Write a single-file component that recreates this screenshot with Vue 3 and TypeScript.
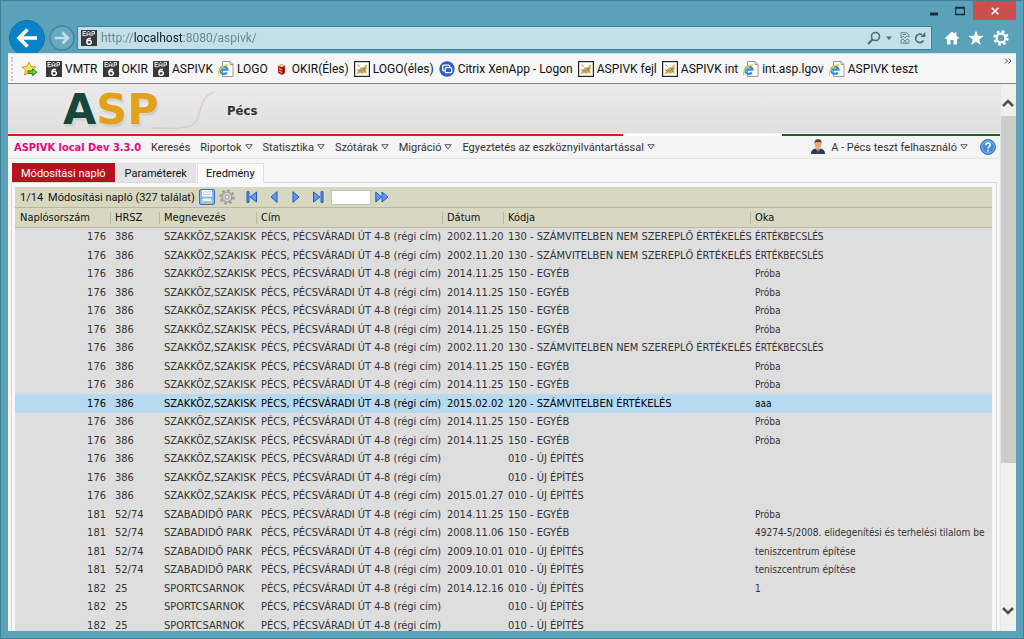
<script setup lang="ts">
import { ref } from 'vue'

interface Bookmark { icon: 'eap' | 'ie' | 'can' | 'cat' | 'citrix'; label: string }
interface Row { id: number; hrsz: string; name: string; date: string; code: string; reason: string }

const bookmarks: Bookmark[] = [
  { icon: 'eap', label: 'VMTR' },
  { icon: 'eap', label: 'OKIR' },
  { icon: 'eap', label: 'ASPIVK' },
  { icon: 'ie', label: 'LOGO' },
  { icon: 'can', label: 'OKIR(Éles)' },
  { icon: 'cat', label: 'LOGO(éles)' },
  { icon: 'citrix', label: 'Citrix XenApp - Logon' },
  { icon: 'cat', label: 'ASPIVK fejl' },
  { icon: 'cat', label: 'ASPIVK int' },
  { icon: 'ie', label: 'int.asp.lgov' },
  { icon: 'ie', label: 'ASPIVK teszt' },
]

const menus = [
  { label: 'Keresés', drop: false },
  { label: 'Riportok', drop: true },
  { label: 'Statisztika', drop: true },
  { label: 'Szótárak', drop: true },
  { label: 'Migráció', drop: true },
  { label: 'Egyeztetés az eszköznyilvántartással', drop: true },
]

const columns = ['Naplósorszám', 'HRSZ', 'Megnevezés', 'Cím', 'Dátum', 'Kódja', 'Oka']
const address = 'PÉCS, PÉCSVÁRADI ÚT 4-8 (régi cím)'

const row = (id: number, hrsz: string, name: string, date: string, code: string, reason: string): Row =>
  ({ id, hrsz, name, date, code, reason })
const school = (date: string, code: string, reason: string) => row(176, '386', 'SZAKKÖZ,SZAKISK', date, code, reason)
const park = (date: string, code: string, reason: string) => row(181, '52/74', 'SZABADIDŐ PARK', date, code, reason)
const hall = (date: string, reason: string) => row(182, '25', 'SPORTCSARNOK', date, BUILD, reason)

const NOT_LISTED = '130 - SZÁMVITELBEN NEM SZEREPLŐ ÉRTÉKELÉS'
const VALUED = '120 - SZÁMVITELBEN ÉRTÉKELÉS'
const OTHER = '150 - EGYÉB'
const BUILD = '010 - ÚJ ÉPÍTÉS'

const rows: Row[] = [
  school('2002.11.20', NOT_LISTED, 'ÉRTÉKBECSLÉS'),
  school('2002.11.20', NOT_LISTED, 'ÉRTÉKBECSLÉS'),
  school('2014.11.25', OTHER, 'Próba'),
  school('2014.11.25', OTHER, 'Próba'),
  school('2014.11.25', OTHER, 'Próba'),
  school('2014.11.25', OTHER, 'Próba'),
  school('2002.11.20', NOT_LISTED, 'ÉRTÉKBECSLÉS'),
  school('2014.11.25', OTHER, 'Próba'),
  school('2014.11.25', OTHER, 'Próba'),
  school('2015.02.02', VALUED, 'aaa'),
  school('2014.11.25', OTHER, 'Próba'),
  school('2014.11.25', OTHER, 'Próba'),
  school('', BUILD, ''),
  school('', BUILD, ''),
  school('2015.01.27', BUILD, ''),
  park('2014.11.25', OTHER, 'Próba'),
  park('2008.11.06', OTHER, '49274-5/2008. elidegenítési és terhelési tilalom be'),
  park('2009.10.01', BUILD, 'teniszcentrum építése'),
  park('2009.10.01', BUILD, 'teniszcentrum építése'),
  hall('2014.12.16', '1'),
  hall('', ''),
  hall('', ''),
]

const selected = ref(9)
const url = ref('http://localhost:8080/aspivk/')
const page = ref('')
</script>

<template>
  <div class="window">
    <header class="chrome">
      <div class="controls">
        <button class="ctl" aria-label="Minimize"><svg width="10" height="10"><path d="M1 8h8" stroke="#1c2f38" stroke-width="3" /></svg></button>
        <button class="ctl" aria-label="Maximize"><svg width="10" height="10"><path d="M.5 1.500v7h9v-7z M0 2h10" fill="none" stroke="#1c2f38" stroke-width="1.500" /></svg></button>
        <button class="ctl close" aria-label="Close"><svg width="8" height="8"><path d="M.7.7l6.600 6.600M7.300.7L.7 7.300" stroke="#fff" stroke-width="1.600" /></svg></button>
      </div>
      <div class="navbar">
        <button class="back" aria-label="Back">
          <svg width="36" height="36" viewBox="0 0 36 36"><circle cx="18" cy="18" r="17.500" fill="#0b82c8" stroke="#1670a4" /><path d="M9.500 18H28M18.500 9.500L10 18l8.500 8.500" fill="none" stroke="#fff" stroke-width="3.600" /></svg>
        </button>
        <button class="forward" aria-label="Forward">
          <svg width="26" height="26" viewBox="0 0 26 26"><circle cx="13" cy="13" r="12" fill="#68a9c0" stroke="#3f839d" stroke-width="1.500" /><path d="M6 13h13M13.500 7.500L19 13l-5.500 5.500" fill="none" stroke="#c9dfe8" stroke-width="2.500" /></svg>
        </button>
        <div class="address">
          <svg width="16" height="16"><use href="#i-eap" /></svg>
          <input v-model="url" class="url" aria-label="Address" />
          <button aria-label="Search"><svg width="14" height="14" viewBox="0 0 14 14"><circle cx="8.500" cy="5.500" r="4" fill="none" stroke="#526b76" stroke-width="1.600" /><path d="M5.500 8.500L1 13" stroke="#526b76" stroke-width="2" /></svg></button>
          <button aria-label="Search options"><svg width="8" height="5"><path d="M1 0.500h6l-3 3.500z" fill="#526b76" /></svg></button>
          <button class="compat" aria-label="Compatibility view"><svg width="10" height="12" viewBox="0 0 10 12"><path d="M1 5V.7h5.500L9 3v2L7 4 5 6 3 4 1 6zM1 11.300V8l2-1 2 2 2-2 2 1v3.300z" fill="none" stroke="#6d8793" /><path d="M3 2.500h3M3 10h4" stroke="#6d8793" /></svg></button>
          <button aria-label="Refresh"><svg width="12" height="14" viewBox="0 0 12 14"><path d="M9.500 9.500A4.200 4.200 0 1 1 8 3.700" fill="none" stroke="#526b76" stroke-width="1.700" /><path d="M6.500 6h4.800V1z" fill="#526b76" /></svg></button>
        </div>
        <div class="tools">
          <button aria-label="Home"><svg width="14" height="14" viewBox="0 0 14 14"><path d="M7 .5l2.500 2.300V1.500h2v3.200L14 7l-1 1.200-1-.8V13.500H8.500V9h-3v4.500H2V7.400l-1 .8L0 7z" fill="#fff" /></svg></button>
          <button aria-label="Favorites"><svg width="16" height="16" viewBox="0 0 16 16"><path d="M8 .5l2 5.300 5.700.2-4.500 3.500 1.600 5.500L8 11.800 3.200 15l1.600-5.500L.3 6 6 5.800z" fill="#fff" /></svg></button>
          <button aria-label="Tools"><svg width="16" height="16" viewBox="0 0 16 16"><circle cx="8" cy="8" r="6.500" fill="none" stroke="#fff" stroke-width="2.400" stroke-dasharray="2.700 2.400" /><circle cx="8" cy="8" r="4.400" fill="none" stroke="#fff" stroke-width="2.200" /></svg></button>
        </div>
      </div>
    </header>

    <nav class="bookmarks" aria-label="Favorites bar">
      <span class="grip"></span>
      <button class="addfav" aria-label="Add to favorites"><svg width="17" height="16" viewBox="0 0 17 16"><path d="M8 1l2 4.500 5 .5-3.700 3.300L12.500 14 8 11.600 3.500 14l1.200-4.700L1 6l5-.5z" fill="#ffe35a" stroke="#d79a1c" /><path d="M7 9.800h4.500V7.700l4.500 3.500-4.500 3.500v-2.200H7z" fill="#5fd03c" stroke="#27851c" /></svg></button>
      <a v-for="b in bookmarks" :key="b.label" href="#" class="bm"><svg width="16" height="16"><use :href="'#i-' + b.icon" /></svg>{{ b.label }}</a>
      <button class="more" aria-label="More favorites"><svg width="8" height="6"><path d="M1 .5L3.500 3 1 5.500M4.500.5L7 3 4.500 5.500" fill="none" stroke="#3c3c8c" /></svg></button>
    </nav>

    <div class="view">
      <main class="page">
        <div class="banner">
          <h1 class="logo"><span>A</span>SP</h1>
          <svg class="swoosh" width="76" height="44" viewBox="0 0 76 44"><path d="M10 38c24 1 40 1 44-7" fill="none" stroke="#c2d6c2" stroke-width="1.300" /><path d="M54 31C61 20 57 7 72 2" fill="none" stroke="#e8c4c6" stroke-width="1.300" /></svg>
          <strong class="city">Pécs</strong>
        </div>
        <div class="stripe"><i class="red"></i><i class="white"></i><i class="green"></i></div>
        <nav class="menu" aria-label="Main menu">
          <strong class="brand">ASPIVK local Dev 3.3.0</strong>
          <button v-for="m in menus" :key="m.label" class="item">{{ m.label }}<svg v-if="m.drop" width="8" height="6"><use href="#i-drop" /></svg></button>
          <button class="item user">
            <svg class="person" width="14" height="16" viewBox="0 0 14 16"><path d="M0 15c0-4 2-5 5-5.500h4c3 .5 5 1.500 5 5.500z" fill="#263c5c" /><path d="M5 9.500l2 4 2-4z" fill="#fff" /><path d="M6.500 10h1l.5 4-1 1-1-1z" fill="#8e2c28" /><ellipse cx="7" cy="5.500" rx="3.200" ry="4.300" fill="#e2aa78" /><path d="M3.500 5C3 1.500 5 .3 7.200.3S11 1.500 10.500 5L9.500 3h-5z" fill="#6a4023" /></svg>
            A - Pécs teszt felhasználó<svg width="8" height="6"><use href="#i-drop" /></svg>
          </button>
          <button class="help" aria-label="Help"><svg width="16" height="16" viewBox="0 0 16 16"><circle cx="8" cy="8" r="7.400" fill="#3f8cdc" stroke="#2561a8" /><circle cx="8" cy="8" r="6.200" fill="none" stroke="#8bbdf0" /><path d="M5.800 6.300C5.800 3.200 10.300 3.400 10.200 6 10.200 7.700 8 7.800 8 9.600M8 10.700v1.700" fill="none" stroke="#fff" stroke-width="1.600" /></svg></button>
        </nav>
        <div class="tabs" role="tablist">
          <button role="tab" class="tab active">Módosítási napló</button>
          <button role="tab" class="tab">Paraméterek</button>
          <button role="tab" class="tab open" aria-selected="true">Eredmény</button>
        </div>
        <section class="panel">
          <div class="toolbar">
            <span>1/14</span>
            <span class="caption">Módosítási napló (327 találat)</span>
            <button aria-label="Save"><svg width="16" height="16" viewBox="0 0 16 16"><rect x=".5" y=".5" width="15" height="15" rx="1.500" fill="#8ab4ee" stroke="#3b6cc0" /><path d="M3 1h10v6.500H3z" fill="#fff" /><path d="M4 3h8M4 5.500h8" stroke="#b4c9e8" /><path d="M3.500 9.500h9V15h-9z" fill="#eef5fb" /><path d="M4 12h8v3H4z" fill="#a5cf97" /></svg></button>
            <button aria-label="Settings"><svg width="16" height="16" viewBox="0 0 16 16"><circle cx="8" cy="8" r="6.600" fill="none" stroke="#999996" stroke-width="2" stroke-dasharray="2.600 2.580" /><circle cx="8" cy="8" r="5" fill="#d0d0ca" stroke="#999996" stroke-width="1.200" /><circle cx="8" cy="8" r="2" fill="#eee" stroke="#999996" /></svg></button>
            <div class="pager">
              <button aria-label="First page"><svg width="12" height="12" viewBox="0 0 12 12" class="blue"><path d="M1 .7h2v10.600H1zM10.500 1v10L4 6z" /></svg></button>
              <button aria-label="Previous page"><svg width="12" height="12" viewBox="0 0 12 12" class="blue"><path d="M9 .7v10.600L3 6z" /></svg></button>
              <button aria-label="Next page"><svg width="12" height="12" viewBox="0 0 12 12" class="blue"><path d="M3 .7v10.600L9 6z" /></svg></button>
              <button aria-label="Last page"><svg width="12" height="12" viewBox="0 0 12 12" class="blue"><path d="M9 .7h2v10.600H9zM1.500 1v10L8 6z" /></svg></button>
            </div>
            <input v-model="page" class="goto" aria-label="Page number" />
            <button aria-label="Go to page"><svg width="14" height="12" viewBox="0 0 14 12" class="blue"><path d="M.8 1v10L6.500 6zM7 1v10l6-5z" /></svg></button>
          </div>
          <div class="scroll">
            <table>
              <colgroup><col class="c1" /><col class="c2" /><col class="c3" /><col class="c4" /><col class="c5" /><col class="c6" /><col /></colgroup>
              <thead><tr><th v-for="c in columns" :key="c" scope="col">{{ c }}</th></tr></thead>
              <tbody>
                <tr v-for="(r, i) in rows" :key="i" :class="{ sel: i === selected }" @click="selected = i">
                  <td class="num">{{ r.id }}</td>
                  <td>{{ r.hrsz }}</td>
                  <td>{{ r.name }}</td>
                  <td>{{ address }}</td>
                  <td>{{ r.date }}</td>
                  <td>{{ r.code }}</td>
                  <td class="note">{{ r.reason }}</td>
                </tr>
              </tbody>
            </table>
          </div>
        </section>
      </main>
      <div class="scrollbar">
        <button aria-label="Scroll up"><svg width="12" height="8"><path d="M1 7l5-5 5 5" fill="none" stroke="#505050" stroke-width="2.500" /></svg></button>
        <div class="track"><div class="thumb"></div></div>
        <button aria-label="Scroll down"><svg width="12" height="8"><path d="M1 1l5 5 5-5" fill="none" stroke="#505050" stroke-width="2.500" /></svg></button>
      </div>
    </div>

    <svg class="defs" aria-hidden="true">
      <symbol id="i-drop" viewBox="0 0 8 6"><path d="M.8.7h6.400L4 5z" fill="none" stroke="#555" /></symbol>
      <symbol id="i-eap" viewBox="0 0 16 16"><rect width="16" height="16" fill="#393939" /><path d="M2 1.500h3M2 1v5M2 3.500h2.500M2 5.700h3M6 6V2.500L7 1.500h1l1 1V6M6 4.200h3M11 6V1.500h2.500v2.500H11" fill="none" stroke="#e6e6e6" /><path d="M10 8.500H7.500L6 10v3l1 1.200h2L10.300 13v-1.500L9.300 10.600H6.500" fill="none" stroke="#fff" stroke-width="1.500" /></symbol>
      <symbol id="i-ie" viewBox="0 0 16 16"><path d="M4.500.5h7.500l3 3v12H4.500z" fill="#fff" stroke="#9a9a9a" /><path d="M12 .5v3h3" fill="none" stroke="#9a9a9a" /><path d="M2.800 8.700h6.700A3.700 3.700 0 1 0 8.800 11.500" fill="none" stroke="#2f8fdc" stroke-width="2.200" /><path d="M1 14.500C-1.500 12 4 3.500 10 4" fill="none" stroke="#e9cf35" stroke-width="1.500" /></symbol>
      <symbol id="i-can" viewBox="0 0 16 16"><path d="M5 5l3-2 4 1.500V12l-3 2-4-2z" fill="#b32619" /><path d="M5 5l3-2 4 1.500L9 6z" fill="#e8cfa5" /><path d="M6 7.500L9 9M6 10l3 1.500" stroke="#f0b08a" /><path d="M10.500 6v7" stroke="#611510" /></symbol>
      <symbol id="i-cat" viewBox="0 0 16 16"><rect x=".6" y=".6" width="14.800" height="14.800" fill="#fff" stroke="#222" stroke-width="1.200" /><path d="M2 12.500l2-2-2-2.500 3 .5L7 6l2 .5L13 3l-.5 3.500 1 1-1.500 1.500 1 4-2.500-1.500L8 13l-1.500-1-3 1z" fill="#cdb062" /><path d="M4 9.500l4 .5 3-3M9 7l2 4M3 3.500l3 2" fill="none" stroke="#8d7a48" stroke-width=".8" /></symbol>
      <symbol id="i-citrix" viewBox="0 0 16 16"><circle cx="8" cy="8" r="7.700" fill="#2f5cc8" /><rect x="3.700" y="4.200" width="7" height="5.500" rx="1" fill="none" stroke="#fff" stroke-width="1.300" /><rect x="6.200" y="6.700" width="6.500" height="5" rx="1" fill="#2f5cc8" stroke="#fff" stroke-width="1.300" /></symbol>
    </svg>
  </div>
</template>

<style>
body { margin: 0; overflow: hidden; }
</style>

<style scoped>
* { box-sizing: border-box; }
.window {
  height: 100vh; display: flex; flex-direction: column; position: relative;
  padding: 0 7px 7px; background: #5aa2ba; border: 1px solid #3f8097;
  font-family: "DejaVu Sans Condensed", "DejaVu Sans", sans-serif; font-size: 11px; color: #333;
}
button { font: inherit; color: inherit; border: 0; padding: 0; background: none; display: flex; align-items: center; justify-content: center; }
svg { display: block; flex: none; }
.defs { position: absolute; width: 0; height: 0; }

.chrome { flex: none; height: 52px; }
.controls { display: flex; justify-content: flex-end; height: 19px; }
.ctl { width: 26px; }
.ctl.close { width: 43px; background: #c9504f; }
.navbar { display: flex; align-items: center; height: 36px; padding-right: 7px; }
.back { width: 37px; }
.forward { width: 29px; margin-left: 2px; }
.address { flex: 1; height: 24px; display: flex; align-items: center; gap: 4px; padding: 0 5px 0 3px; margin-left: 1px; background: #c3dfe7; border: 1px solid #3e8299; }
.url {
  flex: 1; min-width: 0; border: 0; padding: 0; height: 20px; font: 12px/20px Roboto, sans-serif;
  color: transparent; background: linear-gradient(90deg, #6c848e 33px, #101c22 33px 82px, #6c848e 82px);
  -webkit-background-clip: text; background-clip: text; outline: 0;
}
.compat { margin-left: 3px; }
.tools { display: flex; gap: 9px; margin-left: 13px; }

.bookmarks { flex: none; display: flex; align-items: center; gap: 5px; height: 31px; padding: 0 4px 0 3px; background: #f6f6f6; border-top: 1px solid #d2e3e8; border-bottom: 1px solid #828282; font: 12px Roboto, sans-serif; color: #111; }
.grip { height: 24px; border-left: 2px dotted #c9c9c9; }
.addfav { margin: 0 3px; }
.bm { display: flex; align-items: center; gap: 3px; color: inherit; text-decoration: none; white-space: nowrap; }
.more { margin-left: auto; align-self: flex-start; padding-top: 4px; }

.view { flex: 1; min-height: 0; display: flex; background: #f5f5f5; }
.page { flex: 1; min-width: 0; display: flex; flex-direction: column; }
.banner { flex: none; height: 49px; display: flex; align-items: center; background: linear-gradient(#ebebeb, #dfdfdf); position: relative; }
.logo { margin: 0; padding-left: 55px; width: 219px; font: bold 43px/48px "DejaVu Sans", sans-serif; color: #e0a11b; text-shadow: 0 0 3px #fff, 1px 2px 2px #bbb; }
.logo span { color: #17463a; }
.swoosh { position: absolute; left: 134px; top: 6px; }
.city { font-size: 13px; padding-top: 4px; color: #333; }
.stripe { flex: none; height: 3px; display: flex; border-top: 1px solid #f3f3f3; }
.red { width: 62%; background: #e81313; }
.white { flex: 1; background: #fff; }
.green { width: 22%; background: #17642a; }
.menu { flex: none; display: flex; align-items: center; gap: 10px; height: 23px; padding: 0 4px 0 6px; background: #f4f4f4; border-bottom: 1px solid #e4e4e4; white-space: nowrap; }
.brand { color: #e5087e; }
.item, .tab, .toolbar { font-family: Roboto, sans-serif; }
.item { gap: 3px; white-space: nowrap; }
.user { margin-left: auto; }
.help { margin-left: 2px; }
.person { margin-right: 3px; }
.tabs { flex: none; display: flex; align-items: stretch; gap: 1px; height: 23px; padding: 4px 0 0 4px; background: #f7f7f7; }
.tab { padding: 0 8px; background: #e4e4e4; color: #111; border: 1px solid #dedede; border-bottom: 0; }
.tab.active { background: #b5121f; border-color: #b5121f; color: #fff; }
.tab.open { background: #fafafa; margin-bottom: -1px; position: relative; }
.panel { flex: 1; min-height: 0; display: flex; flex-direction: column; margin: 0 3px; padding: 4px 4px 0 3px; border: 1px solid #d8d8d8; border-width: 1px 1px 0; background: #f8f8f8; }
.toolbar { flex: none; display: flex; align-items: center; height: 21px; padding-left: 5px; gap: 4px; background: #d8d8c2; border-bottom: 1px solid #b9b994; color: #111; white-space: nowrap; }
.caption { margin-left: 1px; }
.pager { display: flex; gap: 10px; margin: 0 3px 0 7px; }
.blue path { fill: #5f9cf0; stroke: #1f56c0; stroke-width: 1; }
.goto { width: 40px; height: 15px; padding: 0 2px; border: 1px solid #c4c4b8; background: #fff; font: inherit; }
.scroll { flex: 1; min-height: 0; overflow: hidden; background: #dedede; }
table { width: 100%; table-layout: fixed; border-collapse: separate; border-spacing: 0; }
.c1 { width: 95px; } .c2 { width: 49px; } .c3 { width: 97px; } .c4 { width: 186px; } .c5 { width: 61px; } .c6 { width: 247px; }
th, td { padding: 0 0 0 5px; text-align: left; white-space: nowrap; line-height: 18px; height: 18px; }
th { height: 20px; font-weight: normal; color: #111; background: #d8d8c2; border-bottom: 1px solid #bcbc9a; }
th + th { background: linear-gradient(#b9b996, #b9b996) 0 50% / 1px 12px no-repeat #d8d8c2; }
tbody tr:nth-child(even) td { height: 19px; }
td.num { text-align: right; padding: 0 4px 0 0; }
td.note { font-size: 10px; }
.sel td { background: #b7daf0; color: #000; }
.scrollbar { flex: none; width: 16px; display: flex; flex-direction: column; background: #f0f0f0; border-left: 1px solid #e6e6e6; }
.scrollbar button { height: 32px; padding: 6px 1px 0 0; }
.scrollbar button:last-child { height: 40px; padding: 0 1px 0 0; }
.track { flex: 1; }
.thumb { height: 73%; background: #cdcdcd; }
</style>
